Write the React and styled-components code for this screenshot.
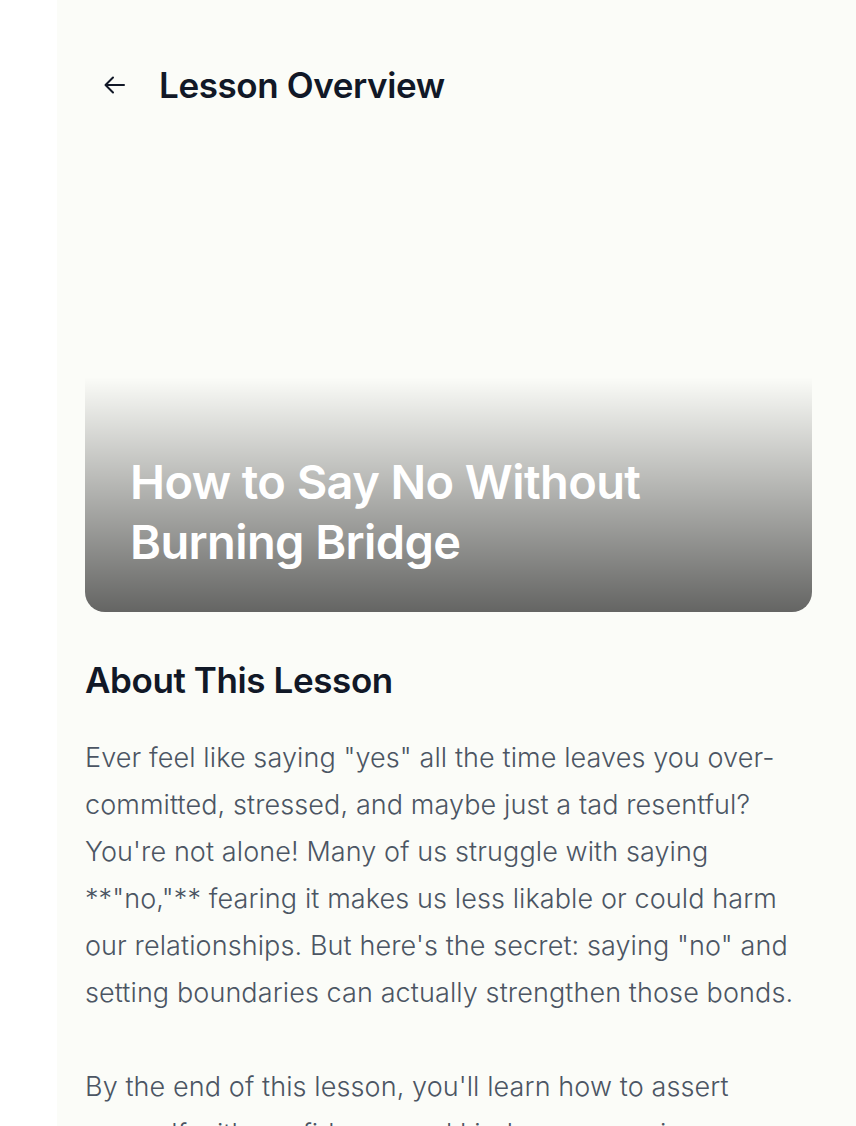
import React from "react";
import styled, { createGlobalStyle } from "styled-components";

const GlobalStyle = createGlobalStyle`
  html, body {
    margin: 0;
    padding: 0;
    background: #ffffff;
  }
  body {
    font-family: "Inter", "Lato", sans-serif;
  }
`;

const Page = styled.main`
  box-sizing: border-box;
  margin-left: 57px;
  min-height: 100vh;
  padding: 0 44px 0 28px;
  background: #fbfcf8;
  overflow: hidden;
`;

const Header = styled.header`
  display: flex;
  align-items: center;
  gap: 34px;
  height: 50px;
  padding: 60px 0 0 18px;
`;

const BackButton = styled.button`
  display: flex;
  align-items: center;
  justify-content: center;
  width: 22px;
  height: 22px;
  padding: 0;
  border: none;
  background: none;
  color: #111827;
  cursor: pointer;
`;

const Title = styled.h1`
  margin: 0;
  font-size: 35px;
  font-weight: 600;
  color: #111827;
  letter-spacing: -0.4px;
`;

const Hero = styled.section`
  display: flex;
  align-items: flex-end;
  box-sizing: border-box;
  height: 480px;
  margin-top: 22px;
  padding: 0 45px 40px;
  border-radius: 20px;
  background: linear-gradient(
    to bottom,
    rgba(0, 0, 0, 0) 0%,
    rgba(0, 0, 0, 0) 51%,
    rgba(0, 0, 0, 0.6) 100%
  );
`;

const HeroTitle = styled.h2`
  margin: 0;
  font-size: 47px;
  line-height: 60px;
  font-weight: 600;
  color: #ffffff;
  letter-spacing: -0.6px;
`;

const SectionTitle = styled.h3`
  margin: 47px 0 0;
  font-size: 35px;
  font-weight: 600;
  color: #111827;
  letter-spacing: -0.4px;
`;

const Body = styled.p`
  margin: 33px 0 0;
  font-size: 27px;
  line-height: 47px;
  font-weight: 300;
  color: #4b5563;
  letter-spacing: 0.1px;
  white-space: pre-line;
`;

const ArrowLeft = () => (
  <svg width="21" height="18" viewBox="0 0 21 18" fill="none" stroke="currentColor" strokeWidth="2" strokeLinecap="round" strokeLinejoin="round">
    <path d="M20 9H2" />
    <path d="M9 1.5L1.5 9 9 16.5" />
  </svg>
);

const aboutText =
  'Ever feel like saying "yes" all the time leaves you over-committed, stressed, and maybe just a tad resentful? You\'re not alone! Many of us struggle with saying **"no,"** fearing it makes us less likable or could harm our relationships. But here\'s the secret: saying "no" and setting boundaries can actually strengthen those bonds.\n\nBy the end of this lesson, you\'ll learn how to assert yourself with confidence and kindness, ensuring your relationships stay strong.';

export default function App() {
  return (
    <>
      <GlobalStyle />
      <Page>
        <Header>
          <BackButton aria-label="Back">
            <ArrowLeft />
          </BackButton>
          <Title>Lesson Overview</Title>
        </Header>
        <Hero>
          <HeroTitle>
            How to Say No Without
            <br />
            Burning Bridge
          </HeroTitle>
        </Hero>
        <SectionTitle>About This Lesson</SectionTitle>
        <Body>{aboutText}</Body>
      </Page>
    </>
  );
}
